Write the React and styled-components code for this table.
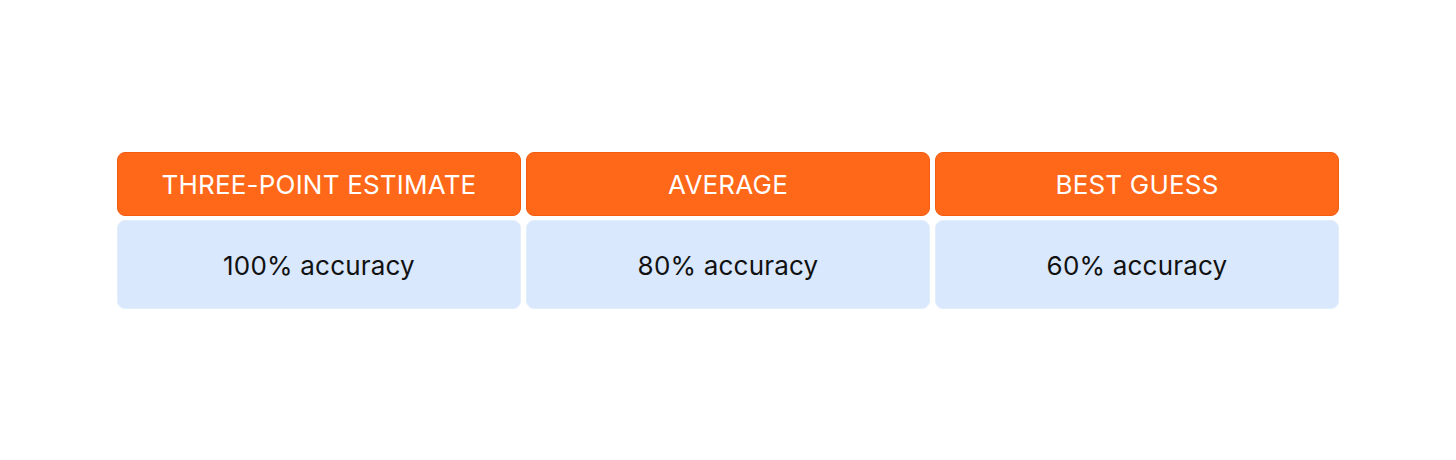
import React from 'react';
import styled, { createGlobalStyle } from 'styled-components';

const GlobalStyle = createGlobalStyle`
  html, body { margin: 0; padding: 0; background: #FFFFFF; }
  body { font-family: Inter, 'Noto Sans', sans-serif; -webkit-font-smoothing: antialiased; }
`;

const columns = [
  { title: 'THREE-POINT ESTIMATE', value: '100% accuracy' },
  { title: 'AVERAGE', value: '80% accuracy' },
  { title: 'BEST GUESS', value: '60% accuracy' },
];

const App = () => {
  return (
    <>
      <GlobalStyle />
      <Page>
        <Table>
          {columns.map((c) => (
            <HeadCell key={c.title}>{c.title}</HeadCell>
          ))}
          {columns.map((c) => (
            <BodyCell key={c.value}>{c.value}</BodyCell>
          ))}
        </Table>
      </Page>
    </>
  );
};

const Page = styled.div`
  width: 1456px; height: 460px; display: flex; align-items: center; justify-content: center;
`;

const Table = styled.div`
  width: 1222px; display: grid; grid-template-columns: repeat(3, 1fr); column-gap: 5px; row-gap: 4px;
  margin-top: 1px;
`;

const Cell = styled.div`
  display: flex; align-items: center; justify-content: center; border-radius: 8px; box-sizing: border-box;
  font-family: Inter, 'Noto Sans', sans-serif; font-weight: 400;
`;

const HeadCell = styled(Cell)`
  height: 64px; background: #FF6719; border: 1px solid #F45C10; color: #FFFFFF;
  font-size: 26px; letter-spacing: 0.2px; padding-top: 1px;
`;

const BodyCell = styled(Cell)`
  height: 89px; background: #D9E8FC; border: 1px solid #E2EEFC; color: #111111;
  font-size: 26px; letter-spacing: 0.2px; padding-top: 1px;
`;

export default App;
